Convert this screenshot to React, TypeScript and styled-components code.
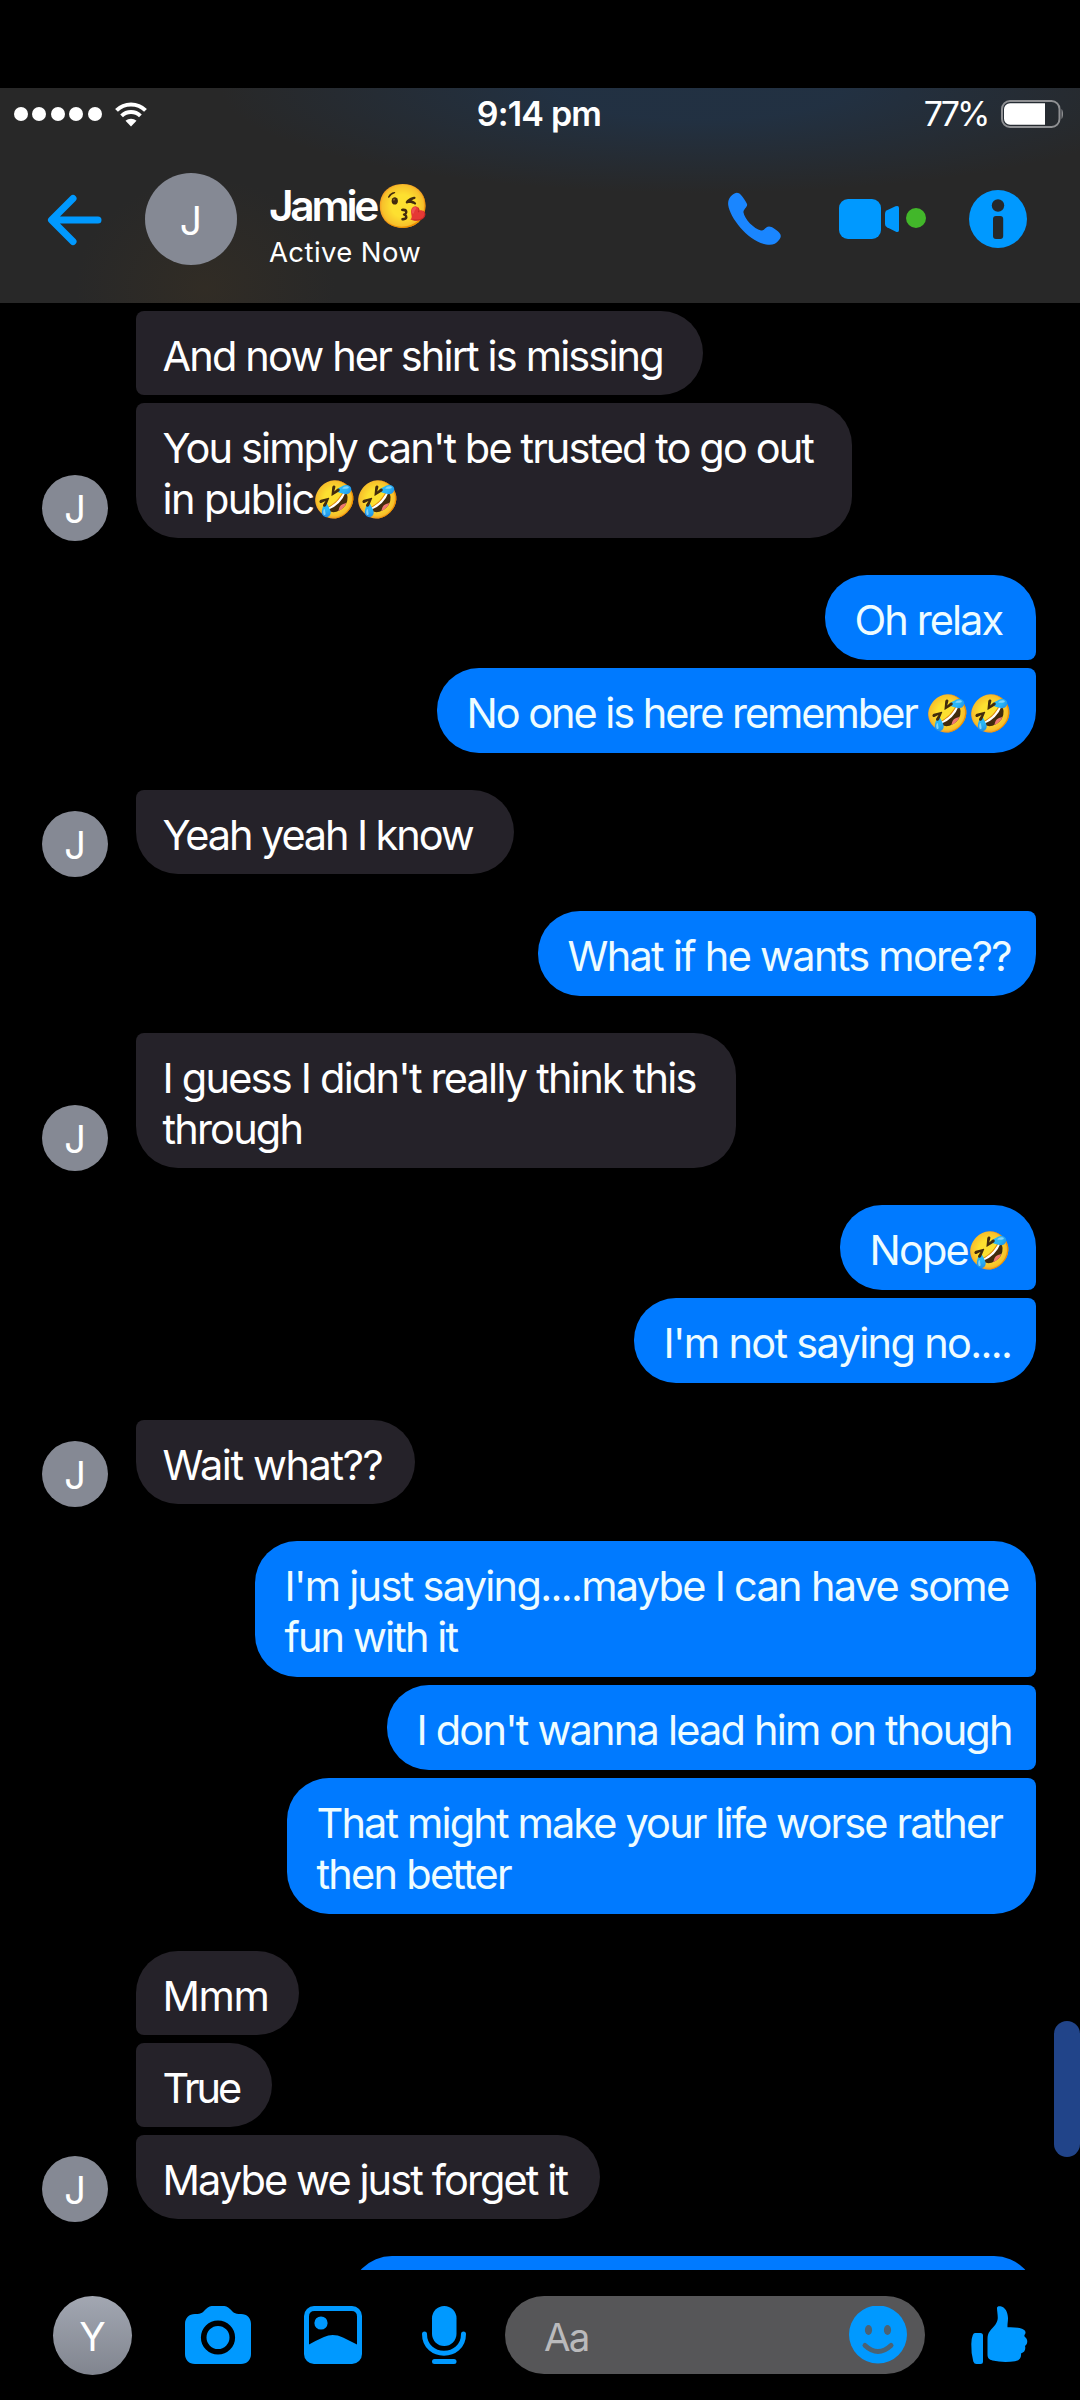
import React from "react";
import styled, { createGlobalStyle } from "styled-components";

const BLUE = "#0099ff";

const GlobalStyle = createGlobalStyle`
  html, body {
    margin: 0;
    background: #000;
  }
  * { box-sizing: border-box; }
`;

const Screen = styled.div`
  position: relative;
  display: flex;
  flex-direction: column;
  width: 1080px;
  height: 2400px;
  padding-top: 88px;
  overflow: hidden;
  background: #000;
  color: #fff;
  font-family: Inter, "Liberation Sans", sans-serif;
`;

/* ---------- header ---------- */

const Header = styled.header`
  display: flex;
  flex-direction: column;
  flex: 0 0 215px;
  background:
    radial-gradient(ellipse 130px 110px at 205px 200px, rgba(70, 54, 30, 0.3), rgba(70, 54, 30, 0) 100%),
    radial-gradient(ellipse 480px 105px at 700px 0px, rgba(30, 54, 82, 0.62) 30%, rgba(30, 54, 82, 0) 100%),
    #282828;
`;

const StatusBar = styled.div`
  display: grid;
  grid-template-columns: 1fr auto 1fr;
  align-items: center;
  height: 52px;
  padding: 0 16px 0 14px;
`;

const Signal = styled.div`
  display: flex;
  align-items: center;
  gap: 4.4px;
`;

const SignalDot = styled.span`
  width: 14px;
  height: 14px;
  border-radius: 50%;
  background: #fff;
`;

const WifiIcon = styled.svg`
  margin-left: 9px;
`;

const Clock = styled.div`
  font-size: 34px;
  font-weight: 600;
  letter-spacing: -0.8px;
  line-height: 52px;
`;

const Power = styled.div`
  display: flex;
  align-items: center;
  justify-content: flex-end;
  font-size: 34px;
  letter-spacing: -2.9px;
  line-height: 52px;
`;

const BatteryIcon = styled.svg`
  margin-left: 13.5px;
`;

const TitleBar = styled.div`
  display: flex;
  align-items: center;
  height: 158px;
  padding-left: 46px;
`;

const Avatar = styled.div<{ $size: number; $font: number; $shade?: boolean }>`
  display: flex;
  align-items: center;
  justify-content: center;
  flex: none;
  width: ${(p) => p.$size}px;
  height: ${(p) => p.$size}px;
  border-radius: 50%;
  background: ${(p) => (p.$shade ? "linear-gradient(#a2a7b2, #81858f)" : "#858994")};
  font-size: ${(p) => p.$font}px;
  line-height: 1;
  padding-top: 2px;
`;

const BackIcon = styled.svg`
  margin-right: 41px;
`;

const Contact = styled.div`
  display: flex;
  flex-direction: column;
  width: 426px;
  margin-left: 32px;
  padding-top: 11px;
`;

const ContactName = styled.div`
  display: flex;
  align-items: center;
  height: 55px;
  font-size: 42.5px;
  font-weight: 600;
  letter-spacing: -3.3px;
`;

const ContactStatus = styled.div`
  height: 38px;
  font-size: 27.5px;
  line-height: 38px;
  letter-spacing: 0.4px;
`;

const Emoji = styled.span<{ $size: number; $box: number }>`
  display: inline-flex;
  justify-content: center;
  width: ${(p) => p.$box}px;
  height: ${(p) => p.$box}px;
  font-family: "Noto Color Emoji", sans-serif;
  font-size: ${(p) => p.$size}px;
  font-weight: 400;
  line-height: ${(p) => p.$box}px;
  letter-spacing: 0;
  vertical-align: 2px;
`;

const HeaderActions = styled.div`
  display: flex;
  align-items: center;
`;

/* ---------- conversation ---------- */

const Conversation = styled.main`
  display: flex;
  flex-direction: column;
  gap: 37px;
  flex: 1 1 0;
  min-height: 0;
  overflow: hidden;
  padding: 8px 44px 0 42px;
`;

const Group = styled.section<{ $sent: boolean }>`
  display: flex;
  align-items: flex-end;
  flex: none;
  justify-content: ${(p) => (p.$sent ? "flex-end" : "flex-start")};
`;

const AvatarSlot = styled.div`
  flex: none;
  width: 94px;
  margin-bottom: -3px;
`;

const Stack = styled.div<{ $sent: boolean }>`
  display: flex;
  flex-direction: column;
  align-items: ${(p) => (p.$sent ? "flex-end" : "flex-start")};
  gap: 8px;
`;

const Bubble = styled.div<{ $sent: boolean; $w: number; $round: string }>`
  width: ${(p) => p.$w}px;
  padding: ${(p) => (p.$sent ? "19.5px 0 14.5px 29.5px" : "19.5px 0 13.5px 26.5px")};
  border-radius: ${(p) => p.$round};
  background: ${(p) => (p.$sent ? "#007aff" : "#252229")};
  color: ${(p) => (p.$sent ? "#eefcff" : "#ffffff")};
`;

const Line = styled.div<{ $track: number }>`
  height: 51px;
  font-size: 41.5px;
  line-height: 51px;
  letter-spacing: ${(p) => p.$track}px;
  white-space: pre;
`;

const ScrollThumb = styled.div`
  position: absolute;
  right: 0;
  top: 2021px;
  width: 26px;
  height: 136px;
  border-radius: 13px;
  background: #214489;
`;

/* ---------- composer ---------- */

const Composer = styled.footer`
  display: flex;
  align-items: center;
  flex: 0 0 130px;
  padding: 0 0 0 53px;
`;

const Tool = styled.svg<{ $gap: number }>`
  flex: none;
  margin-left: ${(p) => p.$gap}px;
`;

const Field = styled.div`
  display: flex;
  align-items: center;
  justify-content: space-between;
  width: 420px;
  height: 78px;
  margin-left: 39px;
  padding: 0 18px 0 39px;
  border-radius: 39px;
  background: #565658;
`;

const Placeholder = styled.span`
  padding-top: 4px;
  color: #bababc;
  font-size: 38.5px;
  letter-spacing: -1.8px;
`;

type Text = [text: string, track: number, emoji?: string];
interface Message {
  w: number;
  lines: Text[];
  round: string;
}
interface Thread {
  sent: boolean;
  messages: Message[];
}

const R = 42;
const S = 8;
const corners = (a: number, b: number, c: number, d: number) => `${a}px ${b}px ${c}px ${d}px`;
const IN_FIRST = corners(R, R, R, S);
const IN_MID = corners(S, R, R, S);
const IN_LAST = corners(S, R, R, R);
const OUT_FIRST = corners(R, R, S, R);
const OUT_MID = corners(R, S, S, R);
const OUT_LAST = corners(R, S, R, R);

const threads: Thread[] = [
  {
    sent: false,
    messages: [
      { w: 567, round: IN_MID, lines: [["And now her shirt is missing", -1.86]] },
      {
        w: 716,
        round: IN_LAST,
        lines: [
          ["You simply can't be trusted to go out", -1.9],
          ["in public", -1.6, "🤣🤣"],
        ],
      },
    ],
  },
  {
    sent: true,
    messages: [
      { w: 211, round: OUT_FIRST, lines: [["Oh relax", -1.92]] },
      { w: 599, round: OUT_LAST, lines: [["No one is here remember ", -2.05, "🤣🤣"]] },
    ],
  },
  { sent: false, messages: [{ w: 378, round: IN_LAST, lines: [["Yeah yeah I know", -2.12]] }] },
  { sent: true, messages: [{ w: 498, round: OUT_LAST, lines: [["What if he wants more??", -1.72]] }] },
  {
    sent: false,
    messages: [
      {
        w: 600,
        round: IN_LAST,
        lines: [
          ["I guess I didn't really think this", -1.78],
          ["through", -1.82],
        ],
      },
    ],
  },
  {
    sent: true,
    messages: [
      { w: 196, round: OUT_FIRST, lines: [["Nope", -1.85, "🤣"]] },
      { w: 402, round: OUT_LAST, lines: [["I'm not saying no....", -1.68]] },
    ],
  },
  { sent: false, messages: [{ w: 279, round: IN_LAST, lines: [["Wait what??", -1.4]] }] },
  {
    sent: true,
    messages: [
      {
        w: 781,
        round: OUT_FIRST,
        lines: [
          ["I'm just saying....maybe I can have some", -1.71],
          ["fun with it", -1.9],
        ],
      },
      { w: 649, round: OUT_MID, lines: [["I don't wanna lead him on though", -1.8]] },
      {
        w: 749,
        round: OUT_LAST,
        lines: [
          ["That might make your life worse rather", -1.87],
          ["then better", -1.75],
        ],
      },
    ],
  },
  {
    sent: false,
    messages: [
      { w: 163, round: IN_FIRST, lines: [["Mmm", -1.4]] },
      { w: 136, round: IN_MID, lines: [["True", -3]] },
      { w: 464, round: IN_LAST, lines: [["Maybe we just forget it", -1.9]] },
    ],
  },
  { sent: true, messages: [{ w: 686, round: OUT_FIRST, lines: [["", 0]] }] },
];

function ConversationGroup({ thread }: { thread: Thread }) {
  return (
    <Group $sent={thread.sent}>
      {!thread.sent && (
        <AvatarSlot>
          <Avatar $size={66} $font={38}>J</Avatar>
        </AvatarSlot>
      )}
      <Stack $sent={thread.sent}>
        {thread.messages.map((m, i) => (
          <Bubble key={i} $sent={thread.sent} $w={m.w} $round={m.round}>
            {m.lines.map(([text, track, emoji], j) => (
              <Line key={j} $track={track}>
                {text}
                {emoji &&
                  Array.from(emoji).map((e, k) => (
                    <Emoji key={k} $size={36} $box={43}>
                      {e}
                    </Emoji>
                  ))}
              </Line>
            ))}
          </Bubble>
        ))}
      </Stack>
    </Group>
  );
}

export default function App() {
  return (
    <>
      <GlobalStyle />
      <Screen>
        <Header>
          <StatusBar>
            <Signal>
              {[0, 1, 2, 3, 4].map((i) => (
                <SignalDot key={i} />
              ))}
              <WifiIcon width="32" height="25" viewBox="0 0 32 25">
                <g fill="none" stroke="#fff" strokeWidth="4">
                  <path d="M1.5 8.4 C9.5 0.4 22.5 0.4 30.5 8.4" />
                  <path d="M6.6 13.9 C12 8.8 20 8.8 25.4 13.9" />
                </g>
                <path d="M10.5 18.7 C13.5 16 18.5 16 21.5 18.7 L16 24.5Z" fill="#fff" />
              </WifiIcon>
            </Signal>
            <Clock>9:14 pm</Clock>
            <Power>
              77%
              <BatteryIcon width="63" height="28" viewBox="0 0 63 28">
                <rect x="1" y="1" width="57.5" height="26" rx="8" fill="none" stroke="#8f9093" strokeWidth="2" />
                <path d="M44 3.3V24.7H9a6 6 0 0 1-6-6V9.3a6 6 0 0 1 6-6Z" fill="#fff" />
                <path d="M60.5 9c2 1.5 2 8.500 0 10Z" fill="#8f9093" />
              </BatteryIcon>
            </Power>
          </StatusBar>
          <TitleBar>
            <BackIcon width="58" height="56" viewBox="0 0 58 56">
              <path
                d="M52 29H6M27 7.500L5.500 29L27 50.500"
                fill="none"
                stroke={BLUE}
                strokeWidth="7"
                strokeLinecap="round"
                strokeLinejoin="round"
              />
            </BackIcon>
            <Avatar $size={92} $font={39}>J</Avatar>
            <Contact>
              <ContactName>
                Jamie
                <Emoji $size={43} $box={54}>😘</Emoji>
              </ContactName>
              <ContactStatus>Active Now</ContactStatus>
            </Contact>
            <HeaderActions>
              <Tool $gap={32} width="56" height="56" viewBox="0 0 56 56">
                <path
                  d="M7.500 2.500C9.500 1 12 1.500 14 4C16.500 7 19 10.500 20 13C21 16 16 18.500 16.500 21.500C17.500 28 27 38 34 39.500C37.500 40 38.500 35.500 42 35.500C45 35.500 50 39 52.500 42C54.500 44.500 54 46.500 52 49C48.500 53.500 45 54.500 39 53.500C21 50 3 27 1.200 14C0.600 8.500 3.500 4.500 7.500 2.500Z"
                  fill="#1a86ff"
                />
              </Tool>
              <Tool $gap={56} width="88" height="42" viewBox="0 0 88 42">
                <rect x="0" y="1" width="42" height="40" rx="9" fill={BLUE} />
                <path d="M46 15.500Q46 13.300 48 12.200L56.500 8.300Q60 7 60 10V32Q60 35 56.500 33.500L48 29.300Q46 28.200 46 26Z" fill={BLUE} />
                <circle cx="77" cy="20" r="10" fill="#42b72a" />
              </Tool>
              <Tool $gap={42} width="58" height="58" viewBox="0 0 58 58">
                <circle cx="29" cy="29" r="29" fill={BLUE} />
                <circle cx="29" cy="15.500" r="6.200" fill="#262829" />
                <rect x="24" y="26" width="10.200" height="23" rx="3" fill="#262829" />
              </Tool>
            </HeaderActions>
          </TitleBar>
        </Header>

        <Conversation>
          {threads.map((t, i) => (
            <ConversationGroup key={i} thread={t} />
          ))}
        </Conversation>

        <Composer>
          <Avatar $size={79} $font={39} $shade>Y</Avatar>
          <Tool $gap={53} width="66" height="58" viewBox="0 0 66 58">
            <path
              d="M10 8C17 8 18 6 21 3C23.500 0.500 25.500 0 29 0H37C40.500 0 42.500 0.500 45 3C48 6 49 8 56 8C62 8 66 12 66 18V48C66 54 62 58 56 58H10C4 58 0 54 0 48V18C0 12 4 8 10 8Z"
              fill={BLUE}
            />
            <circle cx="33" cy="31.500" r="14.300" fill={BLUE} stroke="#000" strokeWidth="5.600" />
          </Tool>
          <Tool $gap={53} width="58" height="58" viewBox="0 0 58 58">
            <rect width="58" height="58" rx="10" fill={BLUE} />
            <path d="M5 38.500V10.500Q5 5 10.500 5H47.500Q53 5 53 10.500V38.500Q46 35 39 31.500Q29 27 20 31Q12 34.500 5 38.500Z" fill="#000" />
            <circle cx="17" cy="17" r="6.600" fill={BLUE} />
          </Tool>
          <Tool $gap={60} width="44" height="58" viewBox="0 0 44 58">
            <rect x="10" y="0" width="24.500" height="40" rx="12.250" fill={BLUE} />
            <path d="M2.500 28C2.500 53.500 41.500 53.500 41.500 28" fill="none" stroke={BLUE} strokeWidth="5" strokeLinecap="round" />
            <path d="M12.500 55.500H32" stroke={BLUE} strokeWidth="5" strokeLinecap="round" />
          </Tool>
          <Field>
            <Placeholder>Aa</Placeholder>
            <svg width="58" height="58" viewBox="0 0 58 58">
              <circle cx="29" cy="28.500" r="29" fill={BLUE} />
              <ellipse cx="19.500" cy="24" rx="3.600" ry="5" fill="#4c6273" />
              <ellipse cx="38.500" cy="24" rx="3.600" ry="5" fill="#4c6273" />
              <path d="M16 39.500Q29 51.500 42 39.500" fill="none" stroke="#4c6273" strokeWidth="5" strokeLinecap="round" />
            </svg>
          </Field>
          <Tool $gap={46} width="57" height="58" viewBox="0 0 57 58">
            <path d="M4 27H9.500Q12 27 12 29.500V55.500Q12 58 9.500 58H5.500Q3.200 58 2.300 55.500Q0 47 0.300 38Q0.500 32 1.800 29Q2.600 27 4 27Z" fill={BLUE} />
            <path
              d="M26 2C26 0.500 27.500 0 29.500 0.300C34 1 36.800 6 37 12C37 15.500 36.300 18 36.500 21.300C42 21 48 21.500 51.500 23C54.500 24.500 55.500 26.500 53.500 29C53.200 30 53.500 30.300 54 31C57 33.500 57 37.500 54 40C55 43.500 53.500 46.500 50 47.500C50.500 52 48.500 54.500 44 55.200C37 56.200 29 56.200 21.500 54.500C18 53.500 16.500 52 16.500 48.500V33C16.500 29.500 17 27.500 19 25C22 21 25.500 18.500 26.500 14C27.300 10 26 6 26 2Z"
              fill={BLUE}
            />
          </Tool>
        </Composer>
        <ScrollThumb />
      </Screen>
    </>
  );
}
